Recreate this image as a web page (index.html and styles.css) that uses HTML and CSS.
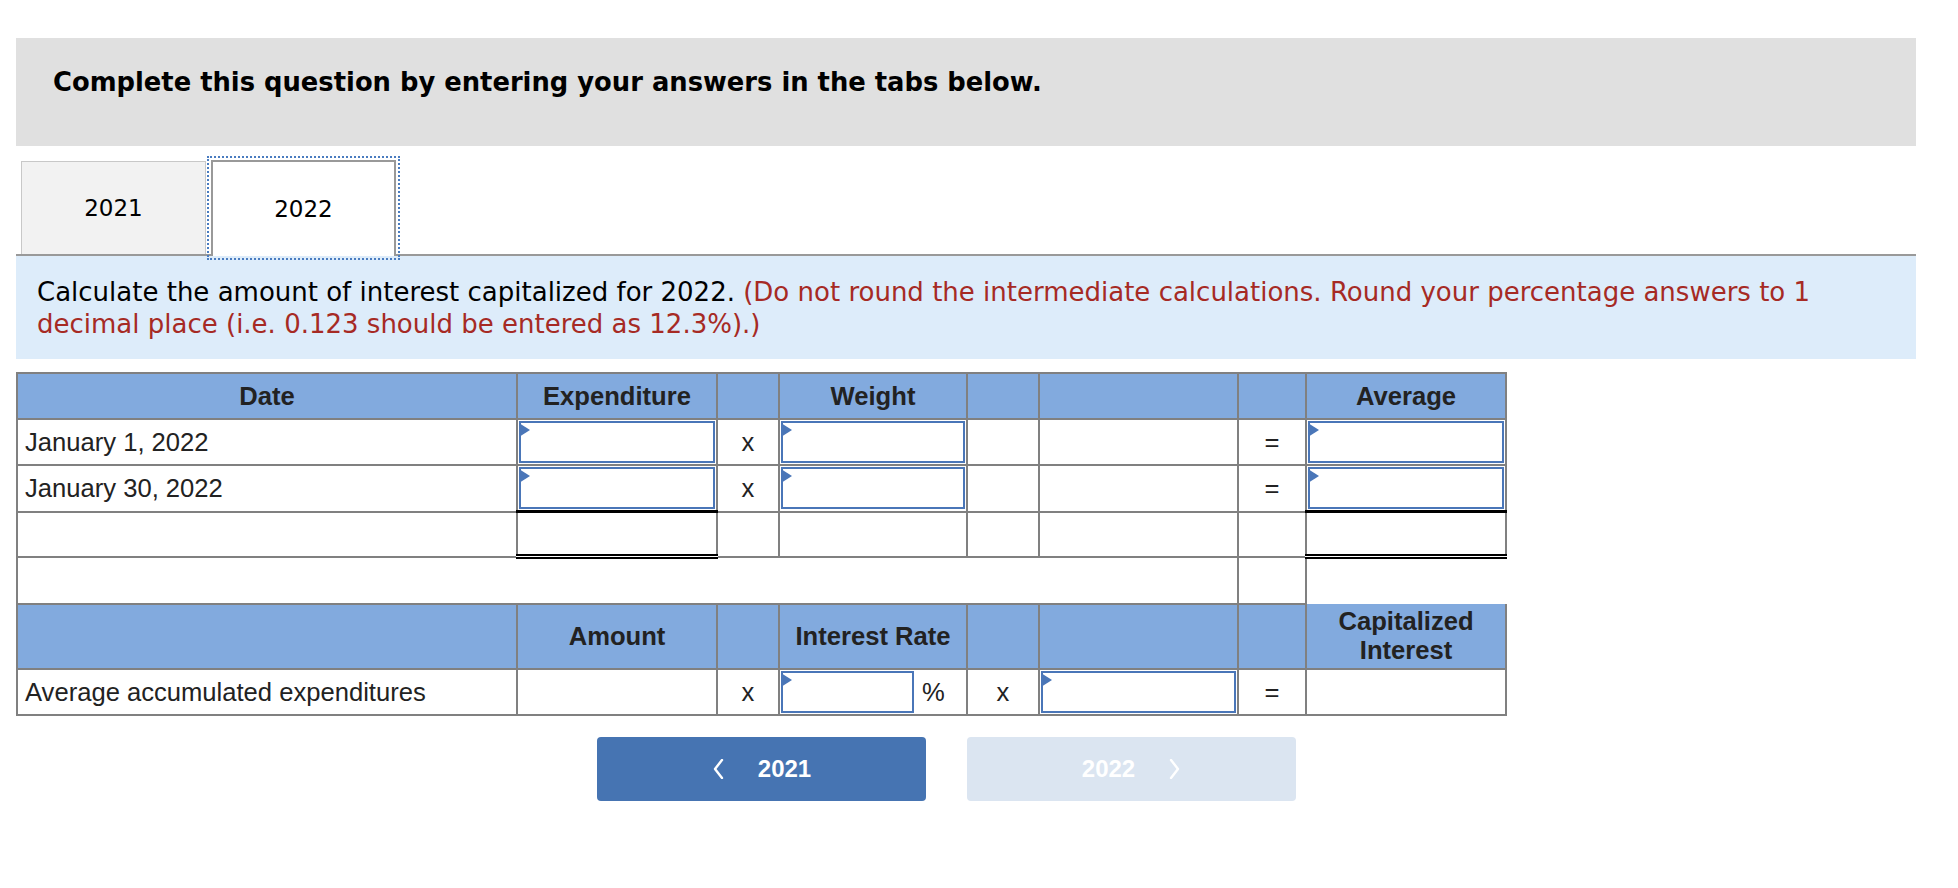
FILE: index.html
```html
<!DOCTYPE html>
<html lang="en">
<head>
<meta charset="utf-8">
<title>Interest capitalized</title>
<link rel="stylesheet" href="styles.css">
</head>
<body>
<div class="page">
  <div class="prompt">Complete this question by entering your answers in the tabs below.</div>

  <div class="tabs">
    <div class="tab">2021</div>
    <div class="tab active">2022</div>
  </div>

  <div class="instr">Calculate the amount of interest capitalized for 2022. <span class="red">(Do not round the intermediate calculations. Round your percentage answers to 1 decimal place (i.e. 0.123 should be entered as 12.3%).)</span></div>

  <table class="grid">
    <colgroup>
      <col class="c1"><col class="c2"><col class="c3"><col class="c4"><col class="c5"><col class="c6"><col class="c7"><col class="c8">
    </colgroup>
    <tr class="row">
      <th class="hd">Date</th>
      <th class="hd">Expenditure</th>
      <th class="hd"></th>
      <th class="hd">Weight</th>
      <th class="hd"></th>
      <th class="hd"></th>
      <th class="hd"></th>
      <th class="hd">Average</th>
    </tr>
    <tr class="row">
      <td class="lbl">January 1, 2022</td>
      <td class="in"><span class="fld"><input type="text"></span></td>
      <td class="op">x</td>
      <td class="in"><span class="fld"><input type="text"></span></td>
      <td></td>
      <td></td>
      <td class="op">=</td>
      <td class="in"><span class="fld"><input type="text"></span></td>
    </tr>
    <tr class="row">
      <td class="lbl">January 30, 2022</td>
      <td class="in"><span class="fld"><input type="text"></span></td>
      <td class="op">x</td>
      <td class="in"><span class="fld"><input type="text"></span></td>
      <td></td>
      <td></td>
      <td class="op">=</td>
      <td class="in"><span class="fld"><input type="text"></span></td>
    </tr>
    <tr class="row tot">
      <td></td>
      <td class="total"></td>
      <td></td>
      <td></td>
      <td></td>
      <td></td>
      <td></td>
      <td class="total"></td>
    </tr>
    <tr class="row">
      <td colspan="6"></td>
      <td></td>
      <td class="void"></td>
    </tr>
    <tr class="row2">
      <th class="hd"></th>
      <th class="hd">Amount</th>
      <th class="hd"></th>
      <th class="hd">Interest Rate</th>
      <th class="hd"></th>
      <th class="hd"></th>
      <th class="hd"></th>
      <th class="hd two">Capitalized<br>Interest</th>
    </tr>
    <tr class="row">
      <td class="lbl">Average accumulated expenditures</td>
      <td></td>
      <td class="op">x</td>
      <td class="in"><div class="rate"><span class="fld short"><input type="text"></span><span class="pct">%</span></div></td>
      <td class="op">x</td>
      <td class="in"><span class="fld"><input type="text"></span></td>
      <td class="op">=</td>
      <td></td>
    </tr>
  </table>

  <div class="nav">
    <button class="btn prev" type="button">
      <svg class="chev" width="12" height="20" viewBox="0 0 12 20"><path d="M10 1 L3 10 L10 19" fill="none" stroke="#fff" stroke-width="2.4" stroke-linecap="round" stroke-linejoin="round"/></svg>
      <span>2021</span>
    </button>
    <button class="btn next" type="button">
      <span>2022</span>
      <svg class="chev" width="12" height="20" viewBox="0 0 12 20"><path d="M2 1 L9 10 L2 19" fill="none" stroke="#fff" stroke-width="2.4" stroke-linecap="round" stroke-linejoin="round"/></svg>
    </button>
  </div>
</div>
</body>
</html>
```

FILE: styles.css
```css
html, body {
  margin: 0;
  padding: 0;
  background: #fff;
}

.page {
  margin: 38px 42px 0 16px;
}

.prompt {
  background: #e0e0e0;
  height: 108px;
  box-sizing: border-box;
  padding: 29px 0 0 37px;
  font-family: "DejaVu Sans", Verdana, sans-serif;
  font-weight: bold;
  font-size: 25.8px;
  line-height: 31px;
  color: #000;
}

.tabs {
  display: flex;
  margin-top: 15px;
  padding-left: 5px;
  height: 93px;
  border-bottom: 2px solid #999;
}

.tab {
  width: 185px;
  box-sizing: border-box;
  border: 1px solid #c8c8c8;
  border-bottom: none;
  background: #f2f2f2;
  display: flex;
  align-items: center;
  justify-content: center;
  font-family: "DejaVu Sans", Verdana, sans-serif;
  font-size: 23px;
  color: #000;
}

.tab.active {
  margin-left: 5px;
  margin-top: -1px;
  height: 96px;
  background: #fff;
  border: 2px solid #999;
  border-bottom: none;
  outline: 2px dotted #4a7cc0;
  outline-offset: 2px;
  position: relative;
  z-index: 1;
}

.instr {
  background: #ddecfa;
  padding: 21px 60px 19px 21px;
  font-family: "DejaVu Sans", Verdana, sans-serif;
  font-size: 26px;
  line-height: 31.5px;
  color: #000;
}

.red {
  color: #a62a24;
}

.grid {
  margin-top: 13px;
  width: 1489px;
  border-collapse: collapse;
  table-layout: fixed;
  font-family: "Liberation Sans", Arial, sans-serif;
  font-size: 25.6px;
  color: #222;
}

.c1 { width: 500px; }
.c2 { width: 200px; }
.c3 { width: 62px; }
.c4 { width: 188px; }
.c5 { width: 72px; }
.c6 { width: 199px; }
.c7 { width: 68px; }
.c8 { width: 200px; }

.grid td,
.grid th {
  border: 2px solid #808080;
  padding: 0;
  vertical-align: middle;
}

.row td,
.row th {
  height: 44px;
}

.row td.in {
  height: 42px;
}

.row.tot td {
  height: 41px;
}

.row2 th {
  height: 63px;
}

.hd {
  background: #82aade;
  font-weight: bold;
  text-align: center;
  color: #222;
}

.hd.two {
  line-height: 29px;
}

.lbl {
  text-align: left;
  padding-left: 7px !important;
}

.op {
  text-align: center;
}

.in {
  padding: 1px !important;
}

.fld {
  position: relative;
  display: block;
  height: 42px;
}

.fld input {
  display: block;
  width: 100%;
  height: 100%;
  box-sizing: border-box;
  margin: 0;
  padding: 0 8px;
  border: 2px solid #4a76b8;
  background: #fff;
  font: inherit;
  color: #222;
  outline: none;
}

.fld::before {
  content: "";
  position: absolute;
  left: 0;
  top: 2px;
  border-left: 11px solid #4a76b8;
  border-top: 7px solid transparent;
  border-bottom: 7px solid transparent;
}

.rate {
  display: flex;
  align-items: center;
}

.fld.short {
  width: 133px;
}

.pct {
  padding-left: 8px;
}

.total {
  border-top: 3px solid #000 !important;
  border-bottom: 5px double #000 !important;
}

.void {
  border-right: hidden !important;
  border-bottom: hidden !important;
}

.nav {
  display: flex;
  gap: 41px;
  margin-top: 21px;
  padding-left: 581px;
}

.btn {
  width: 329px;
  height: 64px;
  border: none;
  border-radius: 4px;
  display: flex;
  align-items: center;
  justify-content: center;
  gap: 34px;
  font-family: "Liberation Sans", Arial, sans-serif;
  font-weight: bold;
  font-size: 24px;
  color: #fff;
  padding: 0;
}

.btn.prev {
  background: #4674b2;
}

.btn.next {
  background: #dbe5f1;
}

.chev {
  display: block;
}
```
